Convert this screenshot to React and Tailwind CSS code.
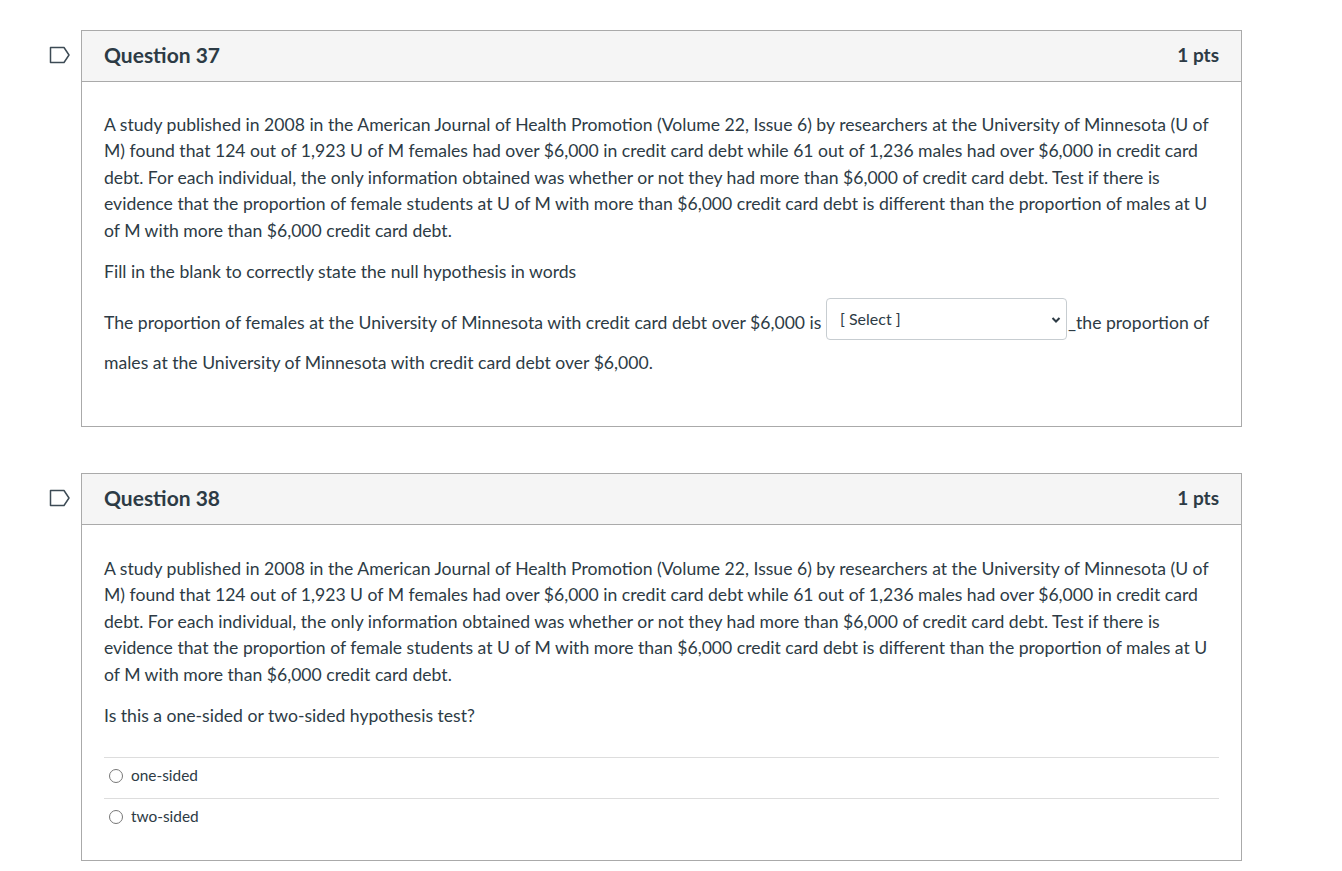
import React from 'react';

const Flag = () => (
    <svg width="22" height="18" viewBox="0 0 22 18" className="shrink-0">
        <path d="M1.5 1.5 H15 L20 9 L15 16.5 H1.5 Z" fill="none" stroke="#3d4b55" strokeWidth="1.5" strokeLinejoin="round" />
    </svg>
);

const stem =
    'A study published in 2008 in the American Journal of Health Promotion (Volume 22, Issue 6) by researchers at the University of Minnesota (U of M) found that 124 out of 1,923 U of M females had over $6,000 in credit card debt while 61 out of 1,236 males had over $6,000 in credit card debt. For each individual, the only information obtained was whether or not they had more than $6,000 of credit card debt. Test if there is evidence that the proportion of female students at U of M with more than $6,000 credit card debt is different than the proportion of males at U of M with more than $6,000 credit card debt.';

const QuestionCard = ({ number, children }) => (
    <div className="flex items-start">
        <div className="w-[81px] shrink-0 flex justify-end pr-[10px] pt-[16px]">
            <Flag />
        </div>
        <div className="w-[1161px] border border-[#aaaaaa]">
            <div className="h-[51px] bg-[#f5f5f5] border-b border-[#aaaaaa] flex items-center justify-between pl-[22px] pr-[22px] pb-[2px]">
                <h2 className="text-[21px] font-bold text-[#2d3b45]">Question {number}</h2>
                <span className="text-[19px] font-bold text-[#2d3b45]">1 pts</span>
            </div>
            {children}
        </div>
    </div>
);

const Answer = ({ label }) => (
    <div className="h-[41px] border-t border-[#dddddd] flex items-center pl-[5px] pb-[5px]">
        <span className="w-[14px] h-[14px] rounded-full border border-[#777777] bg-white"></span>
        <span className="ml-[8px] text-[15.4px] text-[#2d3b45]">{label}</span>
    </div>
);

export default function App() {
    return (
        <div className="bg-white min-h-screen pt-[30px] text-[#2d3b45]" style={{ fontFamily: 'Lato, "Open Sans", sans-serif' }}>
            <QuestionCard number={37}>
                <div className="h-[344px] px-[22px] pt-[30px] text-[17.6px]">
                    <p className="leading-[26.4px]">{stem}</p>
                    <p className="leading-[26px] mt-[15px]">Fill in the blank to correctly state the null hypothesis in words</p>
                    <p className="leading-[39px] mt-[18px]">
                        The proportion of females at the University of Minnesota with credit card debt over $6,000 is{' '}
                        <span className="inline-flex align-middle relative -top-[3px] w-[241px] h-[42px] border border-[#c7cdd1] rounded-[4px] bg-white -mt-[6px] mr-[1px]">
                            <span className="text-[16px] leading-none pl-[13px] pt-[12px] text-[#2d3b45]">[ Select ]</span>
                            <svg width="10" height="8" viewBox="0 0 10 8" className="absolute right-[5px] top-[17px]">
                                <path d="M1.5 2 L5 5.5 L8.5 2" fill="none" stroke="#2d3b45" strokeWidth="2" />
                            </svg>
                        </span>
                        _the proportion of males at the University of Minnesota with credit card debt over $6,000.
                    </p>
                </div>
            </QuestionCard>
            <div className="h-[46px]"></div>
            <QuestionCard number={38}>
                <div className="h-[335px] px-[22px] pt-[31px] text-[17.6px]">
                    <p className="leading-[26.4px]">{stem}</p>
                    <p className="leading-[26px] mt-[15px]">Is this a one-sided or two-sided hypothesis test?</p>
                    <div className="mt-[28px]">
                        <Answer label="one-sided" />
                        <Answer label="two-sided" />
                    </div>
                </div>
            </QuestionCard>
        </div>
    );
}
